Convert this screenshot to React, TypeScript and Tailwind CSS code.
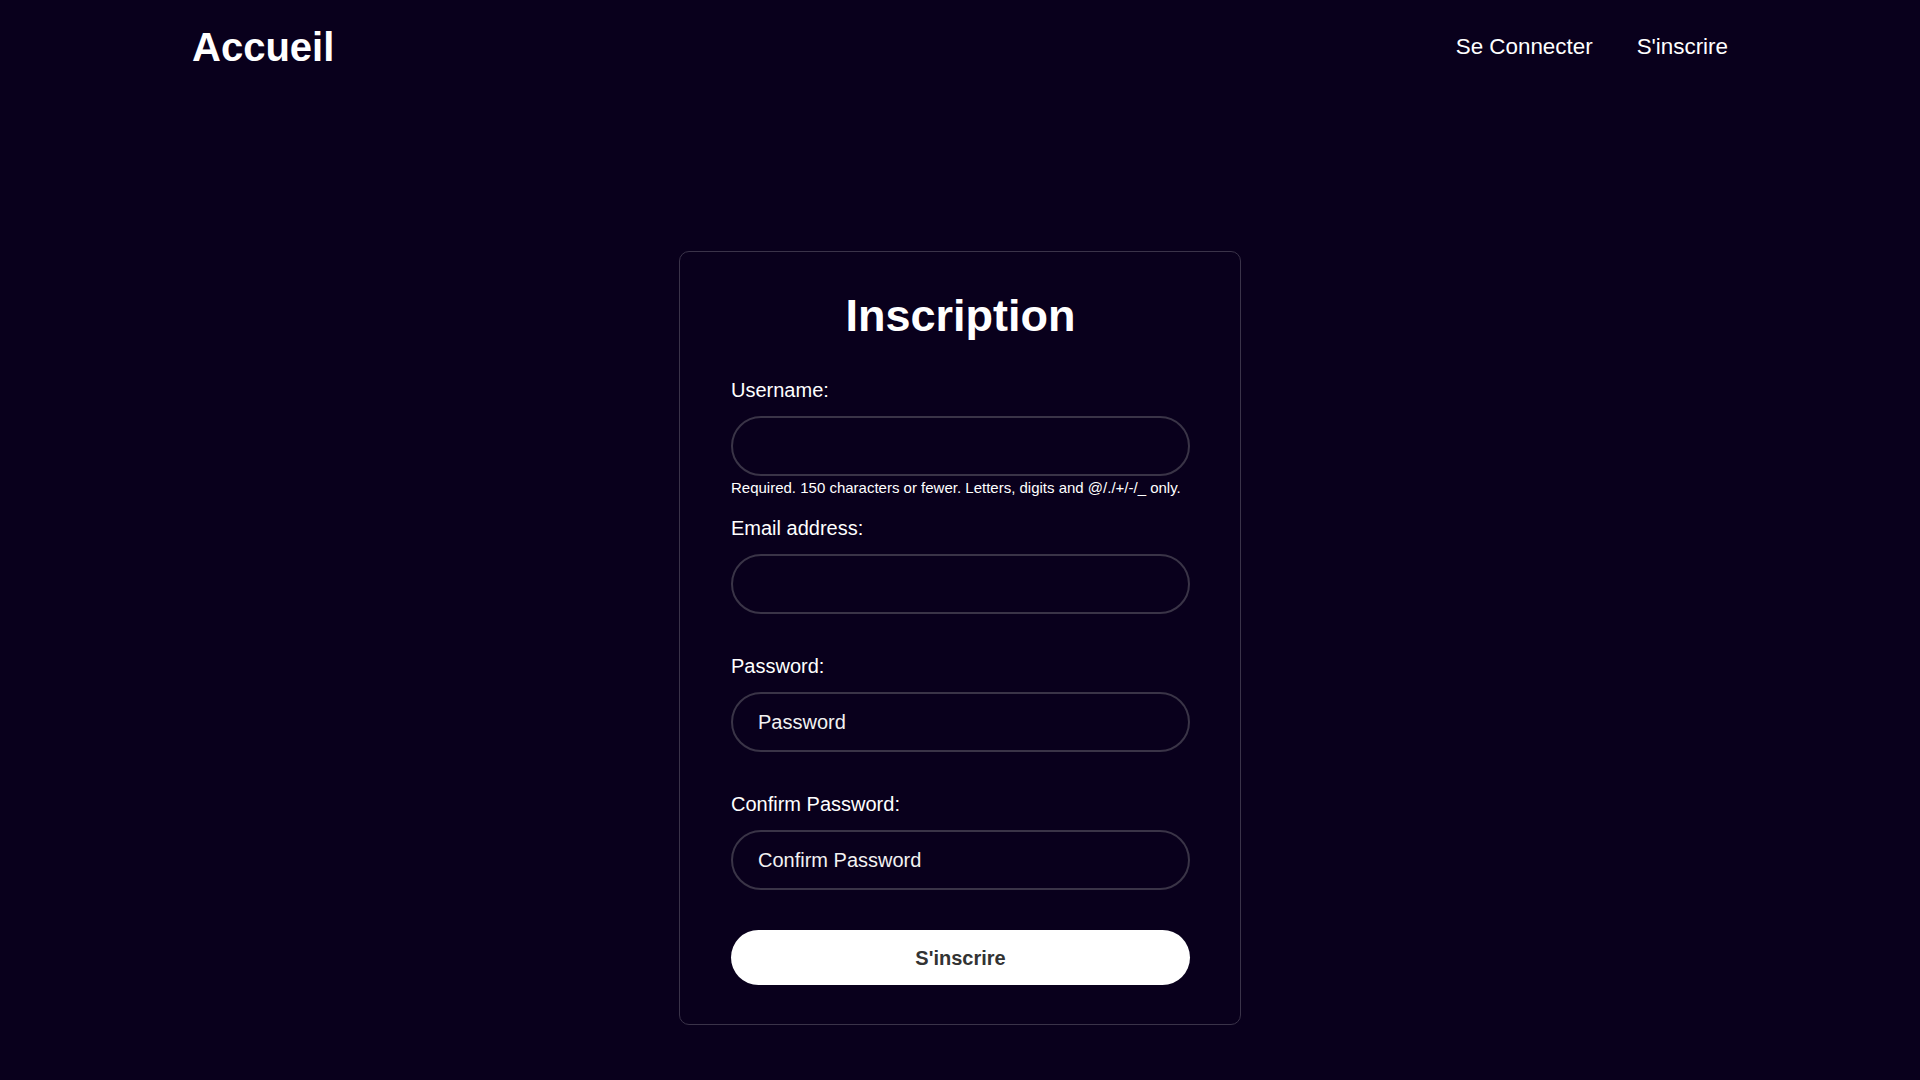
import React from "react";

type Field = {
  id: string;
  label: string;
  type: string;
  placeholder?: string;
  help?: string;
};

const fields: Field[] = [
  {
    id: "username",
    label: "Username:",
    type: "text",
    help: "Required. 150 characters or fewer. Letters, digits and @/./+/-/_ only.",
  },
  { id: "email", label: "Email address:", type: "email" },
  { id: "password1", label: "Password:", type: "password", placeholder: "Password" },
  { id: "password2", label: "Confirm Password:", type: "password", placeholder: "Confirm Password" },
];

export default function App() {
  return (
    <div className="min-h-screen bg-[#09001c] font-['Liberation_Sans',Arial,sans-serif] text-white">
      {/* navbar */}
      <nav className="mx-auto flex h-[93px] w-[80%] items-center justify-between">
        <a href="#" className="text-[40px] leading-none font-bold">
          Accueil
        </a>
        <div className="flex items-center gap-[44px] text-[22.4px]">
          <a href="#">Se Connecter</a>
          <a href="#">S'inscrire</a>
        </div>
      </nav>

      <main className="flex justify-center pt-[158px] pb-[56px]">
        <form className="w-[562px] rounded-[10px] border border-[#3a3349] pt-[37px] pr-[50px] pb-[39px] pl-[51px]">
          <h1 className="mb-[36px] text-center text-[45px] leading-[53px] font-bold">Inscription</h1>

          {fields.map((f) => (
            <div key={f.id}>
              <label htmlFor={f.id} className="block text-[20px] leading-6">
                {f.label}
              </label>
              <input
                id={f.id}
                type={f.type}
                placeholder={f.placeholder}
                className="mt-[14px] block h-[60px] w-full rounded-full border-2 border-[#3a3447] bg-transparent px-[25px] text-[20px] text-white outline-none placeholder:text-[#f2f2f2]"
              />
              <div className="h-[40px] pt-[3px]">
                {f.help && <p className="text-[15px] leading-[17px]">{f.help}</p>}
              </div>
            </div>
          ))}

          <button
            type="submit"
            className="block h-[55px] w-full rounded-full bg-white text-[20px] font-bold text-[#333333]"
          >
            S'inscrire
          </button>
        </form>
      </main>
    </div>
  );
}
